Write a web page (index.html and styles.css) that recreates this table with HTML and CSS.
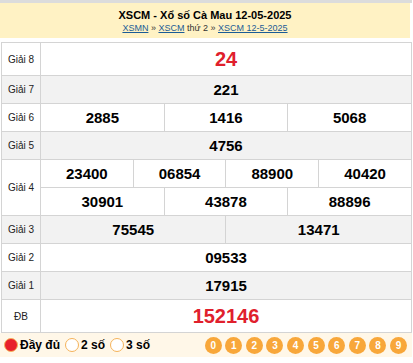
FILE: index.html
```html
<!DOCTYPE html>
<html lang="vi">
<head>
<meta charset="utf-8">
<link rel="stylesheet" href="styles.css">
</head>
<body>
<div class="page">
  <div class="head">
    <h2 class="title">XSCM - Xổ số Cà Mau 12-05-2025</h2>
    <div class="crumbs"><a href="#">XSMN</a> » <a href="#">XSCM</a> thứ 2 » <a href="#">XSCM 12-5-2025</a></div>
  </div>
  <table class="kq">
    <colgroup>
      <col class="c-lbl">
      <col><col><col><col><col><col><col><col><col><col><col><col>
    </colgroup>
    <tr class="r-big">
      <td class="lbl">Giải 8</td>
      <td colspan="12" class="num red big">24</td>
    </tr>
    <tr class="alt">
      <td class="lbl">Giải 7</td>
      <td colspan="12" class="num">221</td>
    </tr>
    <tr>
      <td class="lbl">Giải 6</td>
      <td colspan="4" class="num">2885</td>
      <td colspan="4" class="num">1416</td>
      <td colspan="4" class="num">5068</td>
    </tr>
    <tr class="alt">
      <td class="lbl">Giải 5</td>
      <td colspan="12" class="num">4756</td>
    </tr>
    <tr>
      <td class="lbl" rowspan="2">Giải 4</td>
      <td colspan="3" class="num">23400</td>
      <td colspan="3" class="num">06854</td>
      <td colspan="3" class="num">88900</td>
      <td colspan="3" class="num">40420</td>
    </tr>
    <tr>
      <td colspan="4" class="num">30901</td>
      <td colspan="4" class="num">43878</td>
      <td colspan="4" class="num">88896</td>
    </tr>
    <tr class="alt">
      <td class="lbl">Giải 3</td>
      <td colspan="6" class="num">75545</td>
      <td colspan="6" class="num">13471</td>
    </tr>
    <tr>
      <td class="lbl">Giải 2</td>
      <td colspan="12" class="num">09533</td>
    </tr>
    <tr class="alt">
      <td class="lbl">Giải 1</td>
      <td colspan="12" class="num">17915</td>
    </tr>
    <tr class="r-big">
      <td class="lbl">ĐB</td>
      <td colspan="12" class="num red big">152146</td>
    </tr>
  </table>
  <div class="foot">
    <div class="opts">
      <label class="opt"><span class="radio on"></span>Đầy đủ</label>
      <label class="opt"><span class="radio"></span>2 số</label>
      <label class="opt"><span class="radio"></span>3 số</label>
    </div>
    <div class="balls">
      <span class="ball">0</span><span class="ball">1</span><span class="ball">2</span><span class="ball">3</span><span class="ball">4</span><span class="ball">5</span><span class="ball">6</span><span class="ball">7</span><span class="ball">8</span><span class="ball">9</span>
    </div>
  </div>
</div>
</body>
</html>
```
FILE: styles.css
```css
html, body {
  margin: 0;
  padding: 0;
  background: #fff;
}
body {
  font-family: "Liberation Sans", Arial, sans-serif;
  color: #000;
}
.page {
  width: 412px;
  border-top: 3px solid #dcdcdc;
}
.head {
  background: #fff2c4;
  height: 35px;
  text-align: center;
  width: 410px;
  box-sizing: border-box;
  padding-top: 6px;
}
.title {
  margin: 0;
  font-size: 11px;
  font-weight: bold;
  line-height: 13px;
}
.crumbs {
  font-size: 9px;
  line-height: 12px;
  color: #333;
}
.crumbs a {
  color: #1b5c96;
  text-decoration: underline;
}
.kq {
  margin-top: 4px;
  margin-left: 1px;
  width: 411px;
  border-collapse: collapse;
  table-layout: fixed;
  border: 1px solid #d4d4d4;
}
.c-lbl {
  width: 39px;
}
.kq td {
  border: 1px solid #d4d4d4;
  padding: 0;
  height: 27px;
  text-align: center;
  vertical-align: middle;
}
.kq tr.r-big td {
  height: 32px;
}
.kq tr.alt td {
  background: #f2f2f2;
}
.lbl {
  font-size: 10px;
  color: #222;
}
.num {
  font-size: 15px;
  font-weight: bold;
}
.num.big {
  font-size: 20px;
}
.num.red {
  color: #e0202c;
}
.foot {
  display: flex;
  align-items: center;
  justify-content: space-between;
  height: 24px;
  background: #fff7e8;
  padding: 0 5px 0 4px;
  width: 412px;
  box-sizing: border-box;
}
.opts {
  display: flex;
  align-items: center;
  gap: 5px;
}
.opt {
  display: flex;
  align-items: center;
  gap: 2px;
  font-size: 12px;
  font-weight: bold;
}
.radio {
  width: 12px;
  height: 12px;
  border-radius: 50%;
  border: 1.5px solid #f5b35a;
  background: #fff;
}
.radio.on {
  background: #e8202c;
}
.balls {
  display: flex;
  gap: 3.6px;
}
.ball {
  width: 17px;
  height: 17px;
  border-radius: 50%;
  background: #f8a73a;
  color: #fff;
  font-size: 10px;
  font-weight: bold;
  display: flex;
  align-items: center;
  justify-content: center;
}
```
